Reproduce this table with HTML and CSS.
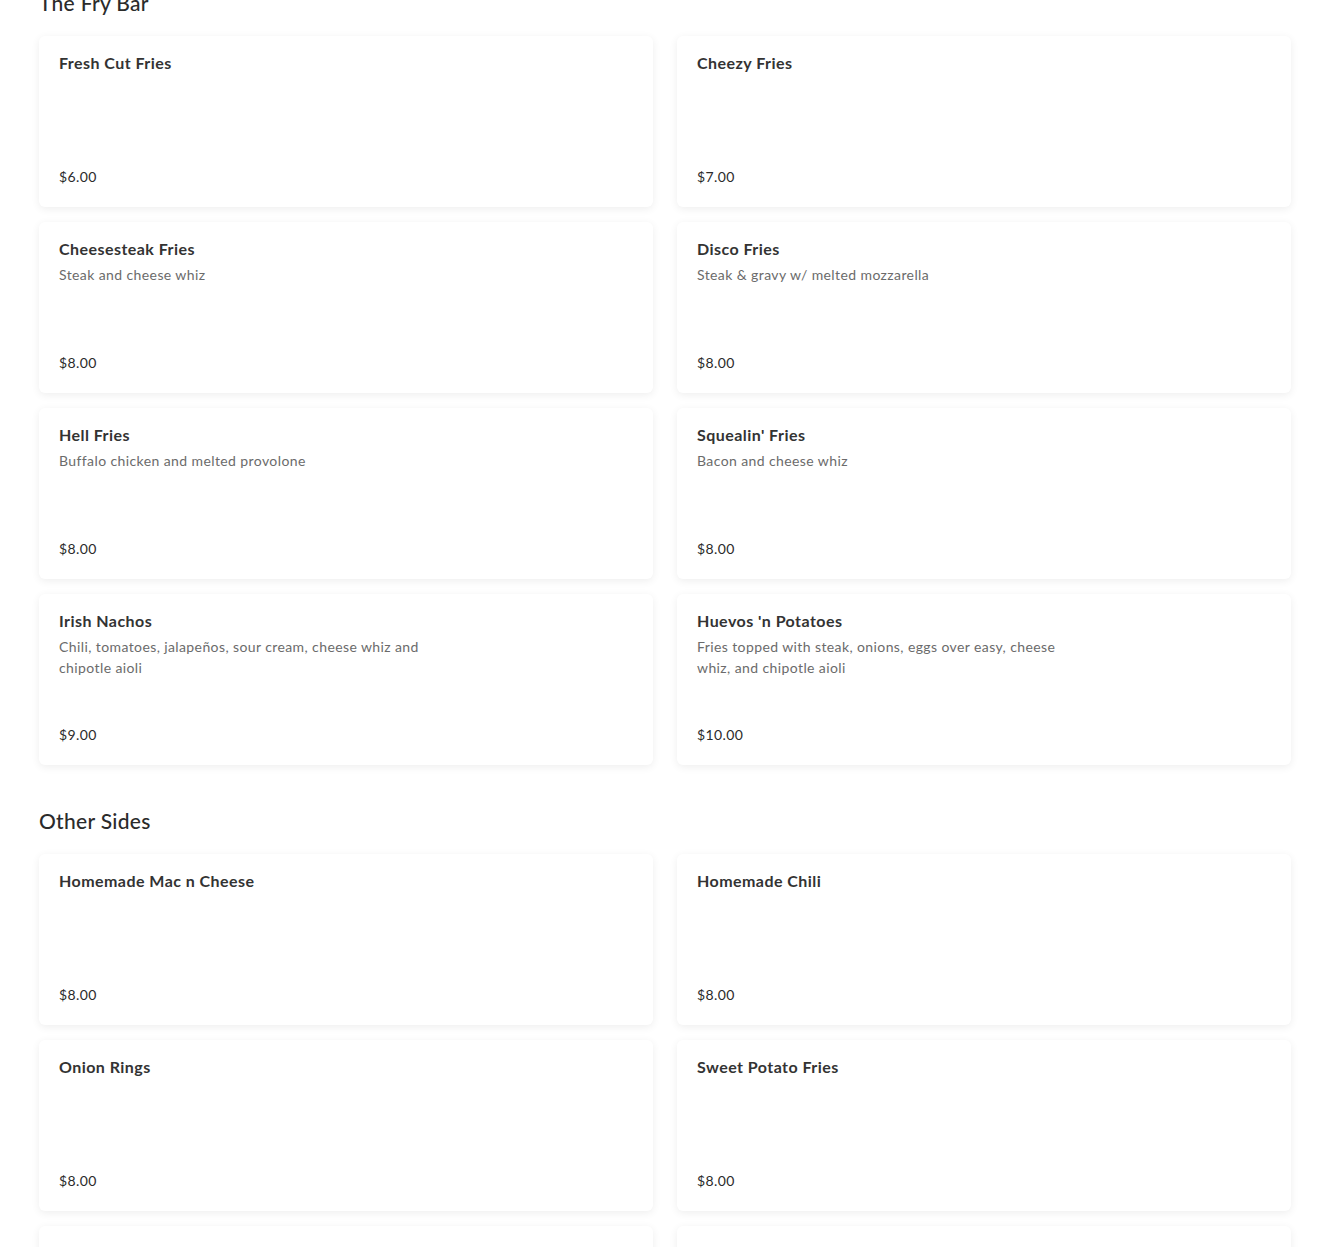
FILE: index.html
```html
<!DOCTYPE html>
<html lang="en">
<head>
    <meta charset="UTF-8">
    <title>Menu</title>
    <link rel="stylesheet" href="styles.css">
</head>
<body>

    <div class="menu">

        <!-- The Fry Bar -->
        <section class="menu-group first">
            <h2 class="group-title">The Fry Bar</h2>
            <div class="items">
                <div class="item">
                    <div class="item-name">Fresh Cut Fries</div>
                    <div class="item-price">$6.00</div>
                </div>
                <div class="item">
                    <div class="item-name">Cheezy Fries</div>
                    <div class="item-price">$7.00</div>
                </div>
                <div class="item">
                    <div class="item-name">Cheesesteak Fries</div>
                    <div class="item-desc">Steak and cheese whiz</div>
                    <div class="item-price">$8.00</div>
                </div>
                <div class="item">
                    <div class="item-name">Disco Fries</div>
                    <div class="item-desc">Steak &amp; gravy w/ melted mozzarella</div>
                    <div class="item-price">$8.00</div>
                </div>
                <div class="item">
                    <div class="item-name">Hell Fries</div>
                    <div class="item-desc">Buffalo chicken and melted provolone</div>
                    <div class="item-price">$8.00</div>
                </div>
                <div class="item">
                    <div class="item-name">Squealin' Fries</div>
                    <div class="item-desc">Bacon and cheese whiz</div>
                    <div class="item-price">$8.00</div>
                </div>
                <div class="item">
                    <div class="item-name">Irish Nachos</div>
                    <div class="item-desc">Chili, tomatoes, jalapeños, sour cream, cheese whiz and chipotle aioli</div>
                    <div class="item-price">$9.00</div>
                </div>
                <div class="item">
                    <div class="item-name">Huevos 'n Potatoes</div>
                    <div class="item-desc">Fries topped with steak, onions, eggs over easy, cheese whiz, and chipotle aioli</div>
                    <div class="item-price">$10.00</div>
                </div>
            </div>
        </section>

        <!-- Other Sides -->
        <section class="menu-group">
            <h2 class="group-title">Other Sides</h2>
            <div class="items">
                <div class="item">
                    <div class="item-name">Homemade Mac n Cheese</div>
                    <div class="item-price">$8.00</div>
                </div>
                <div class="item">
                    <div class="item-name">Homemade Chili</div>
                    <div class="item-price">$8.00</div>
                </div>
                <div class="item">
                    <div class="item-name">Onion Rings</div>
                    <div class="item-price">$8.00</div>
                </div>
                <div class="item">
                    <div class="item-name">Sweet Potato Fries</div>
                    <div class="item-price">$8.00</div>
                </div>
                <div class="item loading">
                    <div class="item-name">Side Salad</div>
                    <div class="item-price">$6.00</div>
                </div>
                <div class="item loading">
                    <div class="item-name">Mozzarella Sticks</div>
                    <div class="item-price">$8.00</div>
                </div>
            </div>
        </section>

    </div>

</body>
</html>
```

FILE: styles.css
```css
* {
    margin: 0;
    padding: 0;
    box-sizing: border-box;
}

body {
    font-family: 'Lato', 'Noto Sans', sans-serif;
    background-color: #fff;
    color: #2b2b2b;
    overflow: hidden;
}

/* Menu wrapper */
.menu {
    padding: 0 39px;
}

.menu-group {
    margin-top: 40px;
}

.menu-group.first {
    margin-top: -13px;
}

.group-title {
    font-size: 21px;
    font-weight: 500;
    line-height: 32px;
    letter-spacing: 0.3px;
    color: #2b2b2b;
    margin-bottom: 17px;
}

/* Item grid */
.items {
    display: grid;
    grid-template-columns: 1fr 1fr;
    column-gap: 24px;
    row-gap: 15px;
}

.item {
    display: flex;
    flex-direction: column;
    height: 171px;
    padding: 16px 20px 20px;
    background: #fff;
    border-radius: 6px;
    box-shadow: 0 2px 8px rgba(0, 0, 0, 0.07);
}

.item-name {
    font-size: 16px;
    font-weight: 700;
    line-height: 22px;
    letter-spacing: 0.45px;
    color: #333;
}

.item-desc {
    margin-top: 4px;
    max-width: 372px;
    font-size: 14px;
    line-height: 21px;
    letter-spacing: 0.4px;
    color: #6b6b6b;
}

.item-price {
    margin-top: auto;
    font-size: 14px;
    line-height: 20px;
    letter-spacing: 0.4px;
    color: #2b2b2b;
}

/* cards still fading in at the bottom of the view */
.item.loading .item-name,
.item.loading .item-price {
    opacity: 0.08;
}
```
